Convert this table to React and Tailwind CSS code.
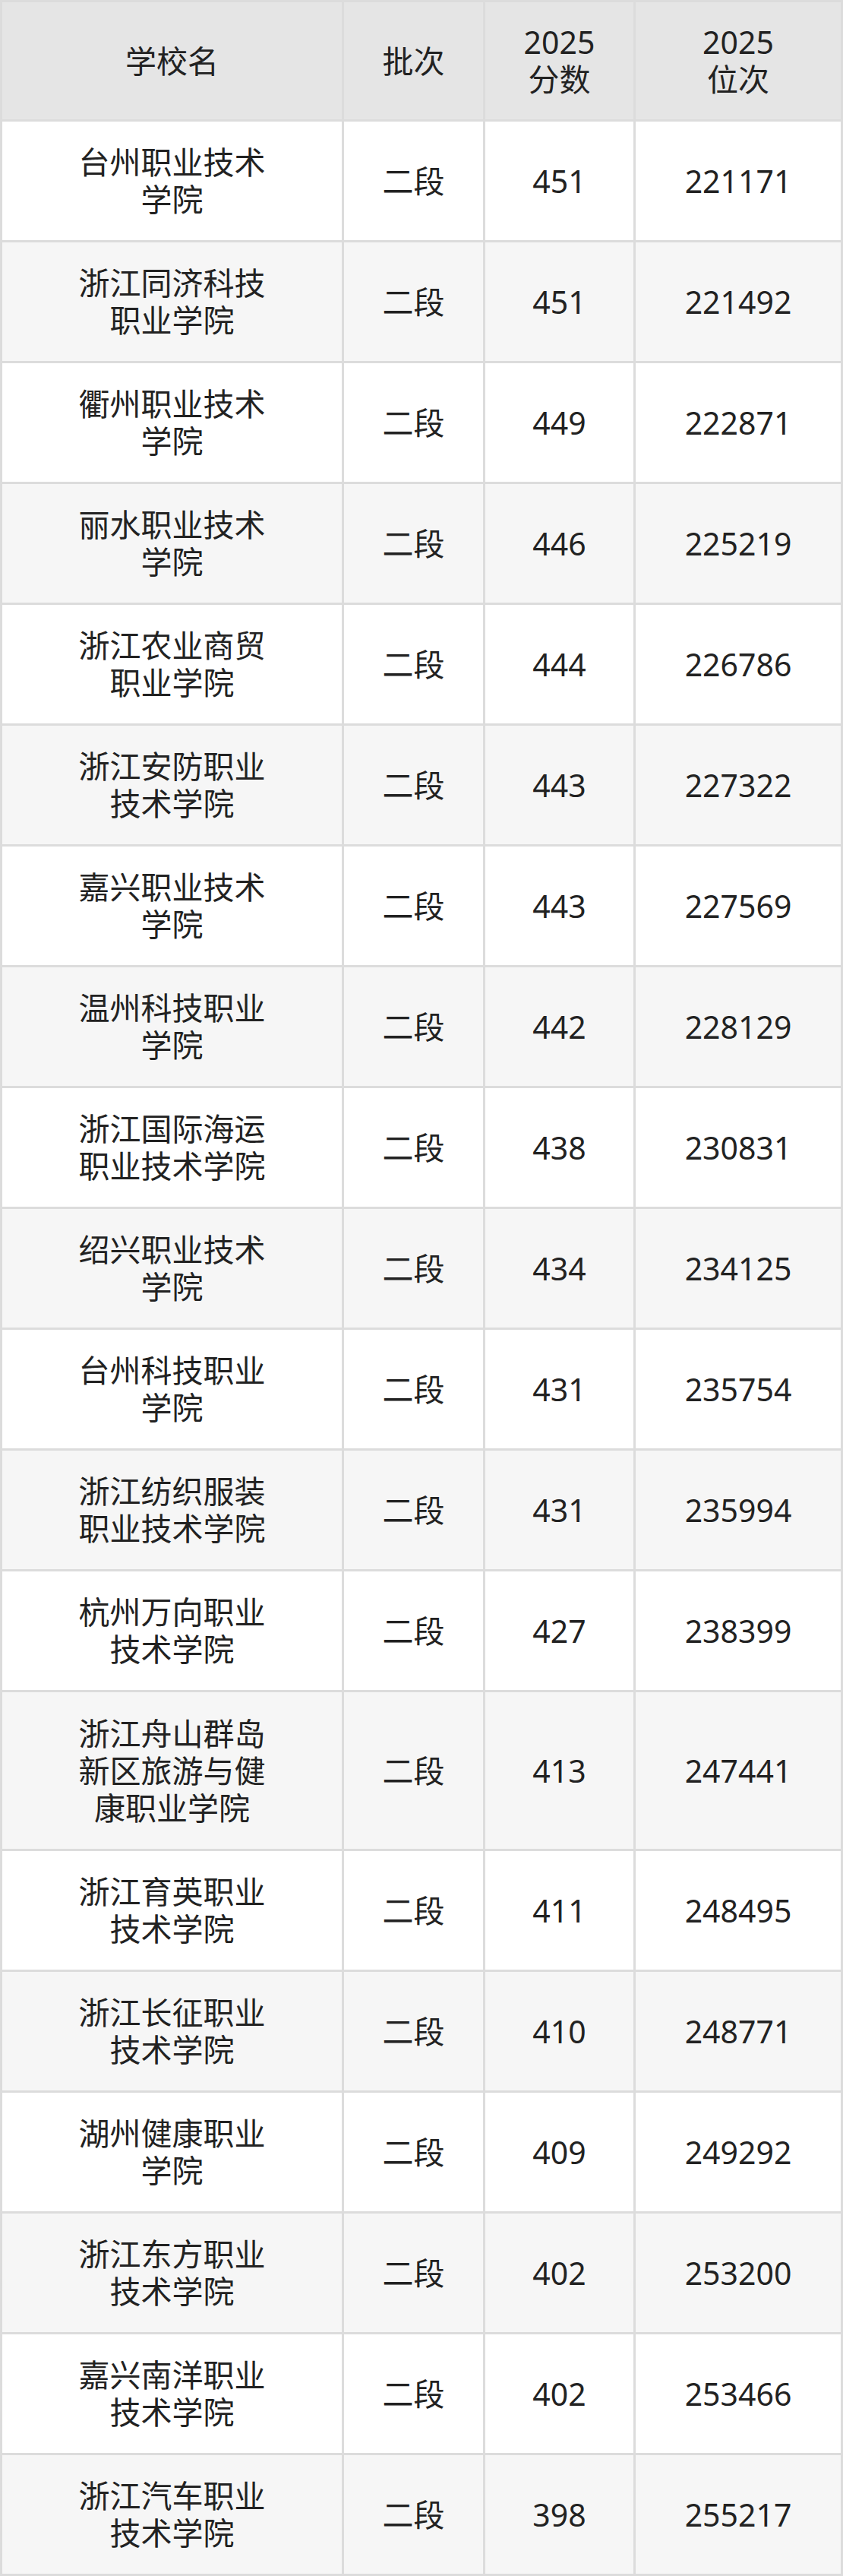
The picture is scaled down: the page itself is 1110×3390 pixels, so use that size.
import React from "react";

const ROWS = [
  ["台州职业技术学院", "451", "221171"],
  ["浙江同济科技职业学院", "451", "221492"],
  ["衢州职业技术学院", "449", "222871"],
  ["丽水职业技术学院", "446", "225219"],
  ["浙江农业商贸职业学院", "444", "226786"],
  ["浙江安防职业技术学院", "443", "227322"],
  ["嘉兴职业技术学院", "443", "227569"],
  ["温州科技职业学院", "442", "228129"],
  ["浙江国际海运职业技术学院", "438", "230831"],
  ["绍兴职业技术学院", "434", "234125"],
  ["台州科技职业学院", "431", "235754"],
  ["浙江纺织服装职业技术学院", "431", "235994"],
  ["杭州万向职业技术学院", "427", "238399"],
  ["浙江舟山群岛新区旅游与健康职业学院", "413", "247441"],
  ["浙江育英职业技术学院", "411", "248495"],
  ["浙江长征职业技术学院", "410", "248771"],
  ["湖州健康职业学院", "409", "249292"],
  ["浙江东方职业技术学院", "402", "253200"],
  ["嘉兴南洋职业技术学院", "402", "253466"],
  ["浙江汽车职业技术学院", "398", "255217"],
];

const cell = "flex items-center justify-center text-center";

export default function App() {
  return (
    <div
      className="w-[1110px] bg-white text-[#222] text-[41px] leading-[49px]"
      style={{ fontFamily: '"Noto Sans", "Noto Sans CJK SC", sans-serif' }}
    >
      <div className="grid grid-cols-[447px_183px_195px_270px] gap-[3px] bg-[#dcdcdc] p-[3px]">
        {/* header */}
        <div className={`${cell} h-[154px] bg-[#e5e5e5]`}>学校名</div>
        <div className={`${cell} h-[154px] bg-[#e5e5e5]`}>批次</div>
        <div className={`${cell} h-[154px] bg-[#e5e5e5]`}>
          2025
          <br />
          分数
        </div>
        <div className={`${cell} h-[154px] bg-[#e5e5e5]`}>
          2025
          <br />
          位次
        </div>

        {ROWS.map(([name, score, rank], i) => {
          const bg = i % 2 === 0 ? "bg-white" : "bg-[#f6f6f6]";
          const h = name.length > 12 ? "h-[206px]" : "h-[156px]";
          return (
            <React.Fragment key={i}>
              <div className={`${cell} ${h} ${bg}`}>
                <div className="w-[260px] break-all">{name}</div>
              </div>
              <div className={`${cell} ${h} ${bg}`}>二段</div>
              <div className={`${cell} ${h} ${bg}`}>{score}</div>
              <div className={`${cell} ${h} ${bg}`}>{rank}</div>
            </React.Fragment>
          );
        })}
      </div>
    </div>
  );
}
